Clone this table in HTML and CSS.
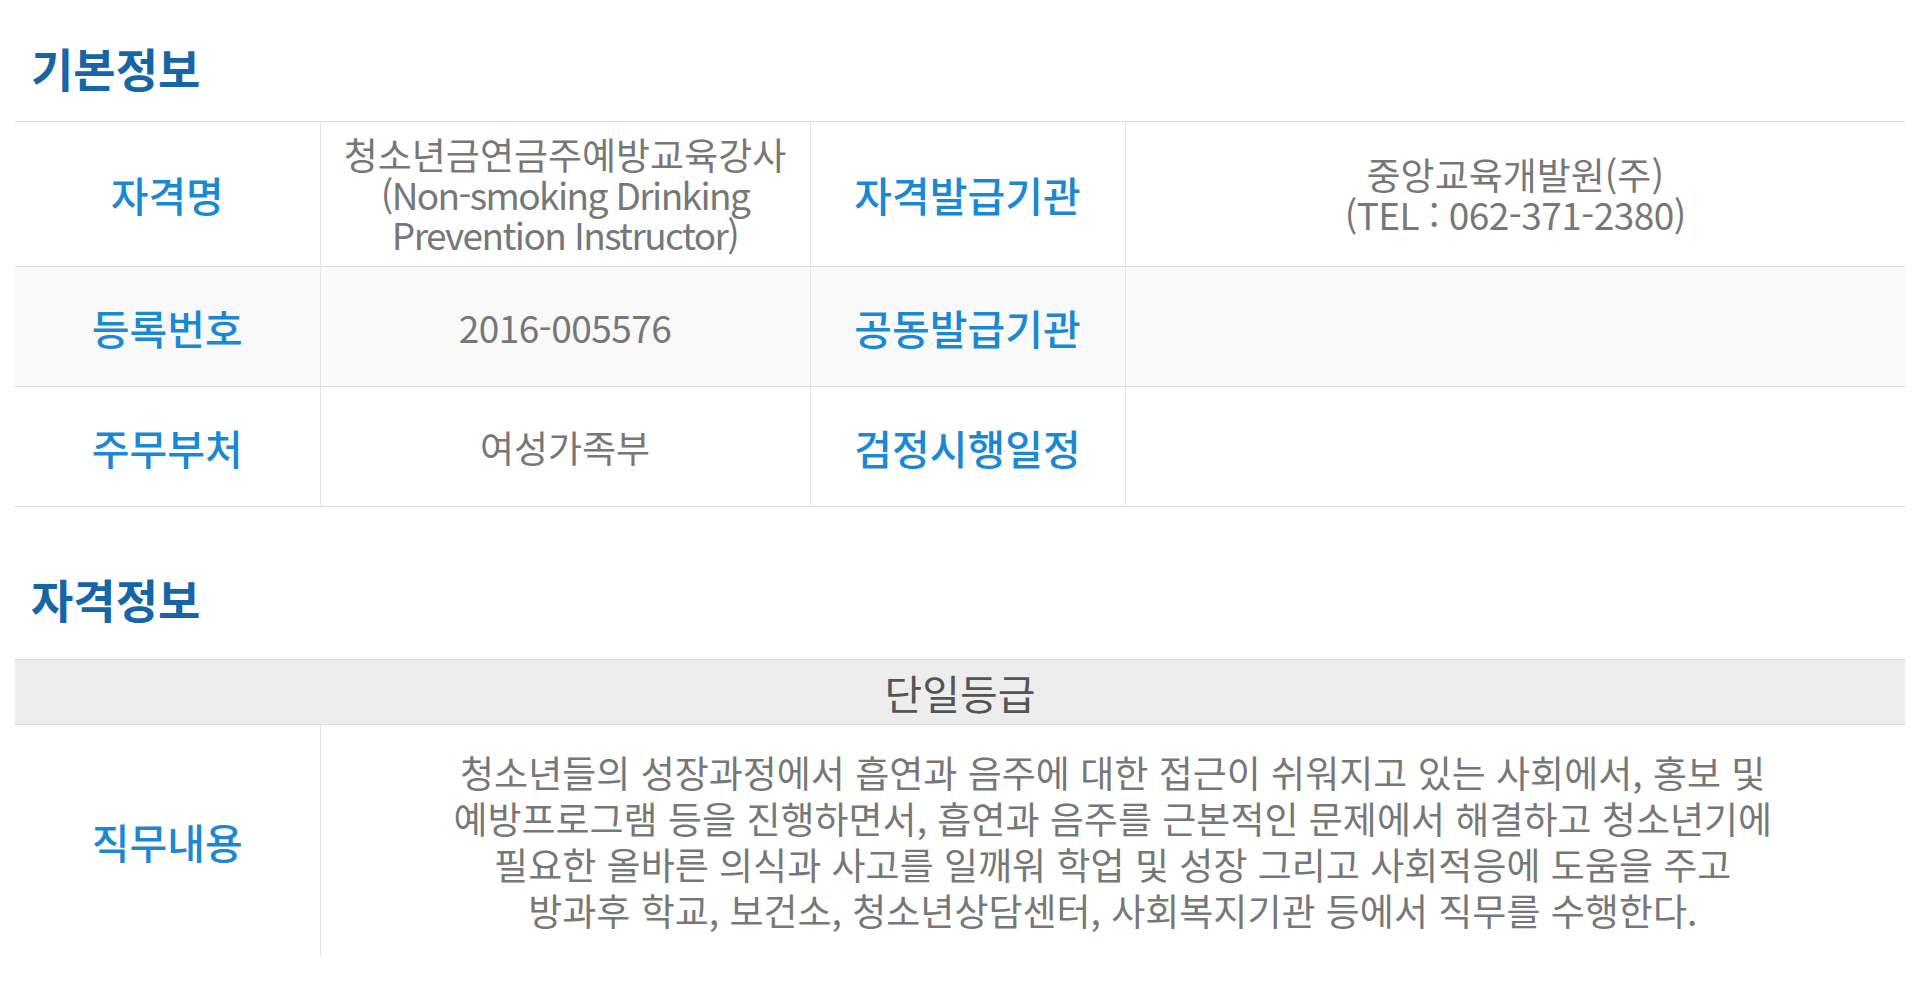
FILE: index.html
```html
<!DOCTYPE html>
<html lang="ko">
<head>
    <meta charset="UTF-8">
    <meta name="viewport" content="width=device-width, initial-scale=1.0">
    <title>자격 기본정보</title>
    <link rel="stylesheet" href="styles.css">
</head>
<body>
    <div class="wrap">
        <h2 class="title">기본정보</h2>
        <table class="info">
            <colgroup>
                <col class="c-label">
                <col class="c-value">
                <col class="c-label2">
                <col>
            </colgroup>
            <tr class="tall">
                <th>자격명</th>
                <td>청소년금연금주예방교육강사<br><span class="en">(Non-smoking Drinking<br>Prevention Instructor)</span></td>
                <th>자격발급기관</th>
                <td>중앙교육개발원(주)<br><span class="tel">(TEL : 062-371-2380)</span></td>
            </tr>
            <tr class="alt">
                <th>등록번호</th>
                <td><span class="tel">2016-005576</span></td>
                <th>공동발급기관</th>
                <td></td>
            </tr>
            <tr>
                <th>주무부처</th>
                <td>여성가족부</td>
                <th>검정시행일정</th>
                <td></td>
            </tr>
        </table>

        <h2 class="title second">자격정보</h2>
        <table class="grade">
            <colgroup>
                <col class="c-label">
                <col>
            </colgroup>
            <tr>
                <td class="grade-head" colspan="2">단일등급</td>
            </tr>
            <tr>
                <th>직무내용</th>
                <td class="job">청소년들의 성장과정에서 흡연과 음주에 대한 접근이 쉬워지고 있는 사회에서, 홍보 및<br>예방프로그램 등을 진행하면서, 흡연과 음주를 근본적인 문제에서 해결하고 청소년기에<br>필요한 올바른 의식과 사고를 일깨워 학업 및 성장 그리고 사회적응에 도움을 주고<br>방과후 학교, 보건소, 청소년상담센터, 사회복지기관 등에서 직무를 수행한다.</td>
            </tr>
        </table>
    </div>
</body>
</html>
```

FILE: styles.css
```css
body {
    margin: 0;
    background: #fff;
    font-family: "Noto Sans CJK KR", "Noto Sans", sans-serif;
    color: #777;
}
.wrap {
    padding: 0 15px;
}
.title {
    margin: 37px 0 24px 16px;
    font-size: 46px;
    line-height: 60px;
    font-weight: bold;
    color: #1665a6;
}
.title.second {
    margin-top: 61px;
    margin-bottom: 31px;
}
table {
    width: 100%;
    border-collapse: collapse;
    table-layout: fixed;
}
.c-label {
    width: 305px;
}
.c-value {
    width: 490px;
}
.c-label2 {
    width: 315px;
}
th, td {
    text-align: center;
    vertical-align: middle;
    padding: 0 8px;
}
th {
    font-size: 41px;
    font-weight: 500;
    color: #1a88d2;
}
td {
    font-size: 37px;
    line-height: 40px;
    font-weight: normal;
    color: #777;
}
.en {
    letter-spacing: -1.6px;
}
.tel {
    letter-spacing: -0.5px;
}
.info {
    border-top: 1px solid #dcdcdc;
}
.info tr {
    height: 120px;
    border-bottom: 1px solid #dcdcdc;
}
.info tr.tall {
    height: 145px;
}
.info tr.alt {
    background: #f9f9f9;
}
.info th + td,
.info td + th {
    border-left: 1px solid #e4e4e4;
}
.grade {
    border-top: 1px solid #dcdcdc;
}
.grade-head {
    height: 64px;
    padding: 0;
    background: #ededed;
    border-bottom: 1px solid #dcdcdc;
    font-size: 41px;
    line-height: 64px;
    color: #555;
}
.grade th {
    height: 231px;
}
.job {
    border-left: 1px solid #e4e4e4;
    line-height: 46px;
    padding: 0 10px;
}
```
